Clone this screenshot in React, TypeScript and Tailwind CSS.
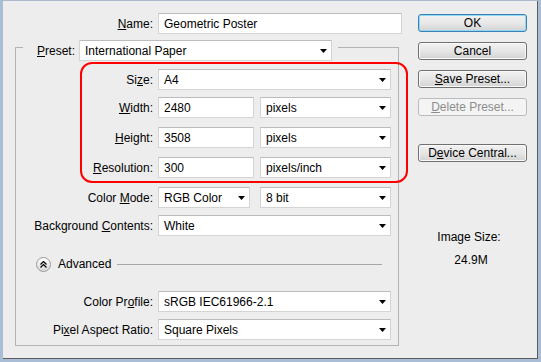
import type { ReactNode } from 'react'

// Photoshop "New" document dialog (Windows 7 look)

const Select = ({ value, className }: { value: string; className: string }) => (
  <div
    className={`h-[21px] bg-white border border-[#d4d4d4] border-t-[#bcbcbc] flex items-center pl-[5px] pr-[4px] ${className}`}
  >
    <span className="flex-1 whitespace-nowrap">{value}</span>
    <svg width="7" height="4" viewBox="0 0 7 4" className="shrink-0">
      <path d="M0 0h7L3.5 4z" fill="#000" />
    </svg>
  </div>
)

const Input = ({ value, className }: { value: string; className: string }) => (
  <div
    className={`h-[21px] bg-white border border-[#d4d4d4] border-t-[#bcbcbc] flex items-center pl-[5px] ${className}`}
  >
    {value}
  </div>
)

const Row = ({ label, children, className = '' }: { label: ReactNode; children: ReactNode; className?: string }) => (
  <div className={`flex items-center ${className}`}>
    <div className="w-[142px] pr-[5px] text-right whitespace-nowrap">{label}</div>
    {children}
  </div>
)

const Button = ({
  children,
  kind = 'normal',
  className = '',
}: {
  children: ReactNode
  kind?: 'normal' | 'default' | 'disabled'
  className?: string
}) => {
  const look =
    kind === 'default'
      ? 'border-[#3c7fb1] shadow-[inset_0_0_0_1px_#8fd8f8] bg-gradient-to-b from-[#f2f2f2] via-[#e8e8e8] to-[#d3d3d3]'
      : kind === 'disabled'
        ? 'border-[#b8bcbf] bg-[#f4f4f4] text-[#8d8d8d]'
        : 'border-[#707070] shadow-[inset_0_0_0_1px_#fafafa] bg-gradient-to-b from-[#f2f2f2] via-[#e6e6e6] to-[#d2d2d2]'
  return (
    <div
      className={`w-[109px] h-[18px] rounded-[3px] border flex items-center justify-center leading-none ${look} ${className}`}
    >
      {children}
    </div>
  )
}

export default function App() {
  return (
    <div
      className="w-[541px] h-[362px] bg-[#ededed] border-t border-t-[#aab9cb] border-l-[3px] border-r-[3px] border-b-[3px] border-l-[#a9bdd6] border-r-[#a9bdd6] border-b-[#a9bdd6] text-[12px] leading-[14px] text-black"
      style={{ fontFamily: '"Liberation Sans", Arial, sans-serif' }}
    >
      <div className="h-full border-r border-b border-[#5c5c5c] flex">
        {/* Left column: fields */}
        <div className="w-[400px] pt-[12px]">
          <div className="flex items-center">
            <div className="w-[155px] pr-[5px] text-right">
              <u>N</u>ame:
            </div>
            <Input value="Geometric Poster" className="w-[244px] border-[#a9c3df] border-t-[#9bb6d3]" />
          </div>

          <fieldset className="ml-[12px] w-[384px] border border-[#b3b3b3] px-0 pt-0 pb-[5px] min-w-0">
            <legend className="ml-[7px] pl-[14px] pr-[6px] pt-[6px] p-0">
              <div className="flex items-center">
                <span className="pr-[4px]">
                  <u>P</u>reset:
                </span>
                <Select value="International Paper" className="w-[253px]" />
              </div>
            </legend>

            {/* Highlighted size block */}
            <div className="relative mt-[8px]">
              <div className="absolute left-[64px] -right-[10px] -top-[7px] -bottom-[5px] border-2 border-[#ff0000] rounded-[12px] pointer-events-none" />
              <Row
                label={
                  <>
                    Si<u>z</u>e:
                  </>
                }
              >
                <Select value="A4" className="w-[233px]" />
              </Row>
              <Row
                className="mt-[7px]"
                label={
                  <>
                    <u>W</u>idth:
                  </>
                }
              >
                <Input value="2480" className="w-[96px]" />
                <Select value="pixels" className="w-[131px] ml-[6px]" />
              </Row>
              <Row
                className="mt-[9px]"
                label={
                  <>
                    <u>H</u>eight:
                  </>
                }
              >
                <Input value="3508" className="w-[96px]" />
                <Select value="pixels" className="w-[131px] ml-[6px]" />
              </Row>
              <Row
                className="mt-[9px]"
                label={
                  <>
                    <u>R</u>esolution:
                  </>
                }
              >
                <Input value="300" className="w-[96px]" />
                <Select value="pixels/inch" className="w-[131px] ml-[6px]" />
              </Row>
            </div>

            <Row
              className="mt-[9px]"
              label={
                <>
                  Color <u>M</u>ode:
                </>
              }
            >
              <Select value="RGB Color" className="w-[92px]" />
              <Select value="8 bit" className="w-[131px] ml-[10px]" />
            </Row>
            <Row
              className="mt-[7px]"
              label={
                <>
                  Background <u>C</u>ontents:
                </>
              }
            >
              <Select value="White" className="w-[233px]" />
            </Row>

            {/* Advanced divider */}
            <div className="flex items-center mt-[20px] h-[16px] ml-[20px] mr-[16px]">
              <div className="w-[15px] h-[15px] rounded-full border border-[#9a9a9a] bg-gradient-to-b from-white to-[#d8d8d8] flex items-center justify-center">
                <svg width="7" height="7" viewBox="0 0 7 7">
                  <path d="M0.5 3.5L3.5 0.5L6.5 3.5M0.5 6.5L3.5 3.5L6.5 6.5" fill="none" stroke="#000" strokeWidth="1.2" />
                </svg>
              </div>
              <span className="ml-[7px]">Advanced</span>
              <div className="flex-1 ml-[6px] h-px bg-[#a6a6a6]" />
            </div>

            <Row
              className="mt-[19px]"
              label={
                <>
                  Color Pr<u>o</u>file:
                </>
              }
            >
              <Select value="sRGB IEC61966-2.1" className="w-[233px]" />
            </Row>
            <Row
              className="mt-[7px]"
              label={
                <>
                  Pi<u>x</u>el Aspect Ratio:
                </>
              }
            >
              <Select value="Square Pixels" className="w-[233px]" />
            </Row>
          </fieldset>
        </div>

        {/* Right column: buttons */}
        <div className="pl-[15px] pt-[13px]">
          <Button kind="default">OK</Button>
          <Button className="mt-[10px]">Cancel</Button>
          <Button className="mt-[10px]">
            <span>
              <u>S</u>ave Preset...
            </span>
          </Button>
          <Button kind="disabled" className="mt-[10px]">
            <span>
              <u>D</u>elete Preset...
            </span>
          </Button>
          <Button className="mt-[28px]">
            <span>
              D<u>e</u>vice Central...
            </span>
          </Button>
          <div className="w-[102px] text-center mt-[68px]">Image Size:</div>
          <div className="w-[106px] text-center mt-[9px]">24.9M</div>
        </div>
      </div>
    </div>
  )
}
